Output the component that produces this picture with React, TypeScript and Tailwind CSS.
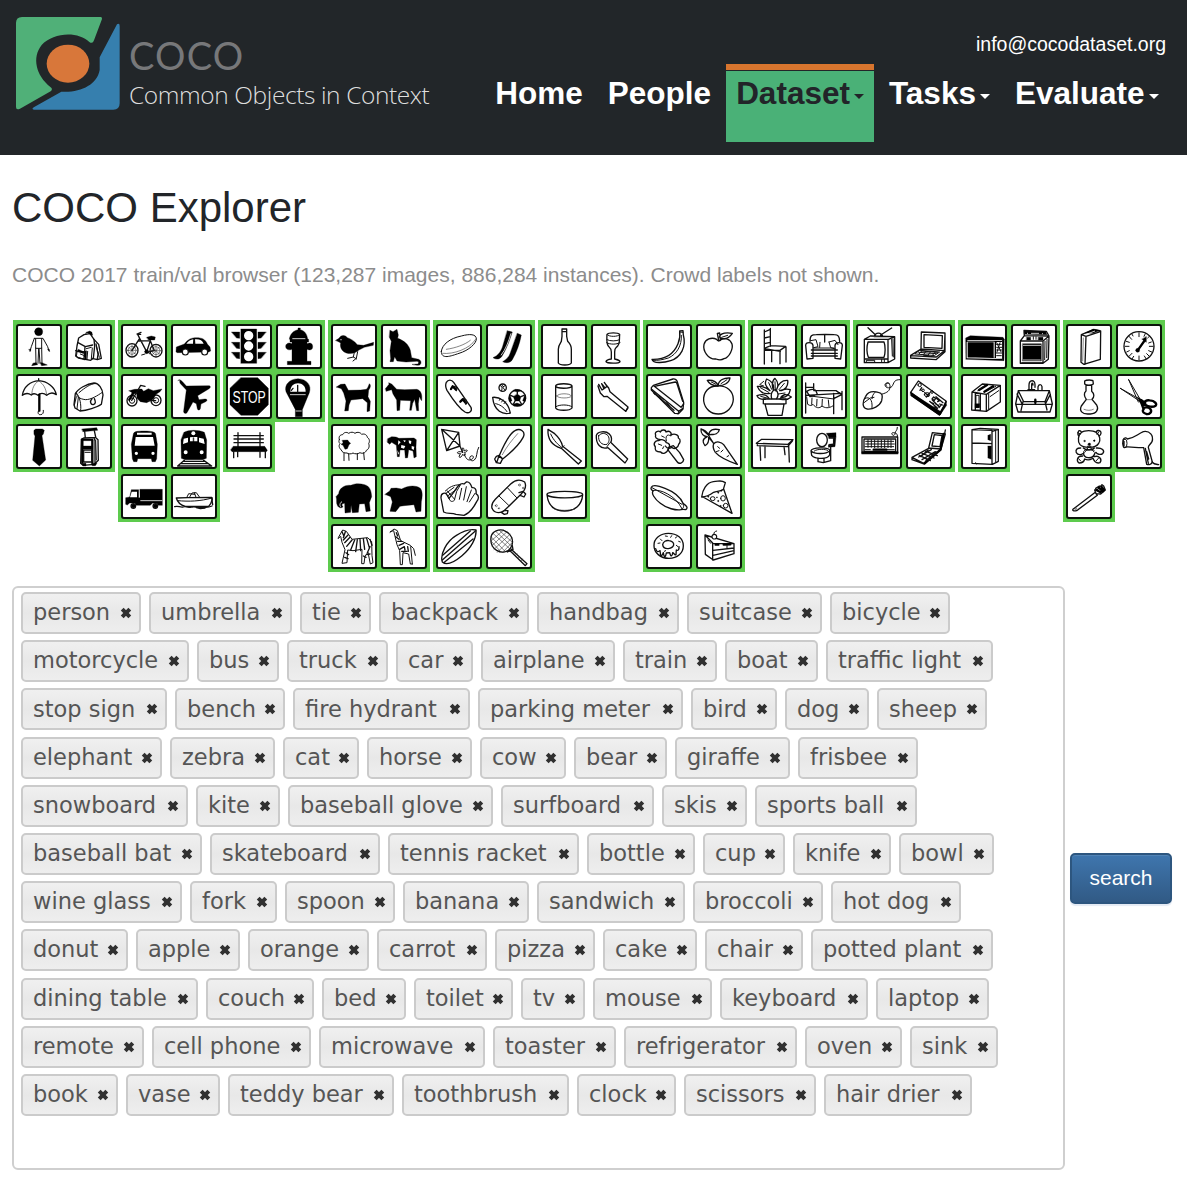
import React from "react";

type Kind = "s" | "m" | "t" | "b" | "f" | "w" | "o" | "x";
type Stroke = [Kind, string];
type Icon = { name: string; at: [number, number]; art: Stroke[] };

// Ellipse expressed as a path.
const c = (x: number, y: number, rx: number, ry: number = rx) =>
  `M${x - rx} ${y}a${rx} ${ry} 0 1 0 ${2 * rx} 0a${rx} ${ry} 0 1 0 ${-2 * rx} 0z`;

const KINDS: Record<Kind, { fill: string; stroke: string; strokeWidth: number }> = {
  s: { fill: "none", stroke: "#111", strokeWidth: 4 },
  m: { fill: "none", stroke: "#111", strokeWidth: 3 },
  t: { fill: "none", stroke: "#333", strokeWidth: 1.8 },
  b: { fill: "none", stroke: "#000", strokeWidth: 7 },
  f: { fill: "#000", stroke: "#000", strokeWidth: 1 },
  w: { fill: "#fff", stroke: "none", strokeWidth: 0 },
  o: { fill: "#fff", stroke: "#111", strokeWidth: 3.6 },
  x: { fill: "none", stroke: "#fff", strokeWidth: 2.4 },
};

const i = (name: string, x: number, y: number, art: Stroke[]): Icon => ({ name, at: [x, y], art });

const GROUPS: Icon[][] = [
  [
    i("person", 25, 22, [
      ["f", c(93, 45, 12)],
      ["m", "M80 65h26l14 25 4 13M80 65l-9 25-4 13M84 66v29h18V66M84 94l1 46M102 94l1 46M93 96l-2 44M94 96l3 44"],
      ["f", "M86 138l4 6-18 3 4-7zM98 138l5 0 16 7-17 2zM64 98l6 0-2 6zM120 98h5l1 6z"],
    ]),
    i("backpack", 175, 22, [
      ["s", "M213 64l16-10 18-3 12 17 2 20-4 37-8 6-37-7-8-6 4-30z"],
      ["s", "M211 78l22 12 22-5M232 90l-2 30M204 102l27 8M259 68l14 15 8 42-12 4-16-4M265 82l6 30-2 16"],
      ["m", "M234 54l2-7h14l3 8M208 106l-2 14 22 8 4-22zM236 96l15-4M240 104l-2 24M254 94l-3 32M218 112l10 4M267 92l8 30"],
      ["f", "M238 47l8-4 7 4 1 8-10-4zM212 98l16 7v4l-18-6zM232 104l5-2-1 26-6 2z"],
    ]),
    i("umbrella", 25, 172, [
      ["s", "M44 236c4-26 24-42 49-44 26 2 48 18 53 42-10-8-20-6-29 2-9-8-20-7-26 0-8-6-15-6-20-1-9-6-18-6-27 1zM93 192v-6"],
      ["t", "M92 193c-14 10-18 22-20 41M94 193c14 10 21 22 23 42"],
      ["b", "M95 234v48"],
      ["m", "M95 280c-7 4-4 15 3 14 8 0 10-6 9-13"],
    ]),
    i("handbag", 175, 172, [
      ["s", "M203 231c8-15 34-30 56-32 14 0 26 17 27 36l-5 28c-12 9-44 19-64 20l-15-9-3-10z"],
      ["m", "M206 228c2 13 8 18 27 21 18 0 36-12 51-22M207 230c10 11 14 35 12 51M214 228c20-17 35-26 46-27M200 266l6-26M208 276l4-34"],
      ["s", "M253 246c-8 8-4 19 4 18 8-2 7-10 3-18"],
    ]),
    i("tie", 25, 322, [["f", "M79 341l5-4 20 0 6 4-3 11-4 5 11 73-19 18-20-17 7-73-3-5z"]]),
    i("suitcase", 175, 322, [
      ["f", "M223 337l44-4 3 8-44 4z"],
      ["s", "M231 344l2 20M260 342l4 19M221 368l7-4 35-2 8 7 1 62-12 12-34 3-7-6zM259 364l3 8v68"],
      ["b", "M224 369v68M254 371v67"],
      ["s", "M230 391h22M228 400h25v36h-25z"],
      ["f", "M224 366h32v6h-32zM226 388h29v9h-29zM221 440h14v8h-8zM252 440h16l-5 7h-9z"],
      ["m", "M264 370l2 60M232 407h16"],
    ]),
  ],
  [
    i("bicycle", 340, 22, [
      ["s", c(373, 101, 18, 20)],
      ["s", c(445, 102, 18, 19)],
      ["t", c(373, 101, 12) + c(445, 102, 12)],
      ["t", "M373 84v34M357 101h32M362 90l22 23M384 89l-22 24M445 84v34M429 102h32M434 91l22 22M456 90l-22 24"],
      ["s", "M373 101l23-36 22 42 22-5-12-30-36 1M428 72l-12 36M396 65l-6-12h9M388 52l12-5"],
      ["f", "M417 62l14-4 12 3-2 9h-18z"],
      ["f", c(417, 105, 6)],
      ["m", "M412 112l-10 3M420 104l6 8"],
    ]),
    i("car", 490, 22, [
      ["f", "M505 105l1-14 24-9c11-15 22-19 37-19 17 0 27 6 32 19l8 9 2 12-6 3-94 2z"],
      ["w", "M536 81c7-9 13-12 21-13l-1 13zM562 68c14-1 22 3 26 13h-25z"],
      ["o", c(533, 106, 9) + c(591, 106, 9)],
      ["m", "M560 68l-1 14"],
    ]),
    i("motorcycle", 340, 172, [
      ["s", c(373, 252, 15, 16)],
      ["s", c(445, 251, 15, 16)],
      ["m", c(373, 252, 8) + c(445, 251, 8)],
      ["f", "M364 222l17-4 21-1 6 7 14-8 15 6 26-5-6 8-12 8-8 15-20 10-19-3-10-10-1-14-7 0-14 21-5-2 12-22z"],
      ["s", "M391 220l8-14 13 3M372 251l16-25M420 252h24"],
    ]),
    i("airplane", 490, 172, [
      ["f", "M511 191c4-4 10 0 15 6l10 11 65-1c9-1 9 6 2 10l-33 20 4 12 17-2c9 0 9 5 3 8l-14 7-2 14c-2 6-8 5-9 0l-3-15-10-5-18 32c-4 5-12 1-10-6l8-62-14-15c-6-5-7-9-5-14z"],
    ]),
    i("bus", 340, 322, [
      ["f", "M377 352c1-7 9-9 33-9 23 0 33 3 34 10l5 30-2 43-4 9h-10l-2-9h-41l-2 9h-10l-4-9-3-43z"],
      ["w", "M384 361h52l5 26h-60zM388 348h44v6h-44z"],
      ["w", c(386, 410, 5) + c(436, 410, 5)],
    ]),
    i("train", 490, 322, [
      ["f", "M529 347c7-4 17-6 29-6s24 2 32 6l7 23-1 55-11 4h-53l-11-4-1-55z"],
      ["w", c(557, 350, 6)],
      ["w", "M528 366l13-3v14l-15 5zM547 362l9-1h13v13h-22zM574 363l14 3 3 16-17-5z"],
      ["w", c(534, 407, 6) + c(582, 407, 6)],
      ["f", "M557 363h2v18h-2z"],
      ["s", "M530 431l-20 17M588 431l24 17M527 434h64M519 441h82M511 448h100"],
    ]),
    i("truck", 340, 472, [
      ["f", "M397 518h67v48h-12l-3-5-14-2-7 7h-42l-5-7-15 0-7 6-5-2v-20l12-2 5-22h22v24h4z"],
      ["w", "M372 525h16v17h-21z"],
      ["o", c(377, 568, 7) + c(443, 568, 7)],
      ["f", c(377, 568, 6) + c(443, 568, 6)],
      ["x", "M398 552h66"],
    ]),
    i("boat", 490, 472, [
      ["s", "M506 544l34-1 72-1 2 6-5 13-6 8-70 0c-18-5-24-13-27-25z"],
      ["m", "M510 552c34 3 68 2 103-8M537 543l6-12 18 2M546 541l7-12 13-1 10 14M560 528l5 14"],
      ["s", "M501 570c10-4 16 3 25 1 10-4 18 4 28 0 10-3 15 5 27 1 11-2 14 4 32-4M566 573l12 3 14-2M612 544l3 20"],
    ]),
  ],
  [
    i("traffic light", 19, 22, [
      ["f", "M64 37h47v103H64zM36 46h24v19l-9-1zM36 77h24v19l-9-1zM36 107h24v19l-9-1zM139 46h-24v19l9-1zM139 77h-24v19l9-1zM139 107h-24v19l9-1z"],
      ["w", c(87, 57, 14) + c(87, 88, 14) + c(87, 120, 14)],
    ]),
    i("fire hydrant", 169, 22, [
      ["f", "M209 67c2-15 12-25 26-28v-5h7v5c13 3 20 13 22 28l3 1v8h-5v5c10-4 17-1 17 9 0 9-8 12-17 8v36h12v10h-71v-10h14V98c-11 4-19 0-19-9 0-8 9-13 19-8v-5h-6v-8z"],
      ["x", "M218 66h39"],
    ]),
    i("stop sign", 19, 172, [["f", "M64 183h50l32 32v49l-32 32H64l-33-32v-49z"]]),
    i("parking meter", 169, 172, [
      ["f", "M199 225c-6-20 9-38 36-39 26 1 42 20 34 42l-21 51v21h-21v-21z"],
      ["w", "M212 225c0-17 10-25 23-25s23 9 23 25z"],
      ["s", "M234 206v20M220 215l-5 6"],
      ["x", "M211 234h47"],
      ["x", "M228 283h18"],
    ]),
    i("bench", 19, 322, [
      ["s", "M43 357h88M43 367h88M43 378h88M55 348v42M121 348v42"],
      ["f", "M41 389h94l8 12-3 4H37l-4-5z"],
      ["s", "M42 402v21M54 402v18M121 402v20M137 402v21"],
    ]),
  ],
  [
    i("bird", 333, 22, [
      ["f", "M347 71l10-6c4-10 18-12 25-2 10 3 20 9 30 21l19 2 30-9-1 9-27 6-16 8c-11 10-25 13-38 9-15-5-20-19-17-30z"],
      ["m", "M403 107l-3 14-17 4M413 105l-4 20-10 8M400 121l10 6"],
      ["w", c(363, 69, 1.8)],
    ]),
    i("cat", 484, 22, [
      ["f", "M511 41l9 4 12-7 4 17-2 10c18 6 33 18 38 36l4 22 17 4c12 1 14 14 7 18-8 2-20 0-23-2l17-1c4-2 4-8-2-8l-33 2-27-3-7-13-4 15h-10l2-9-2-24 4-28-6-12z"],
    ]),
    i("dog", 333, 172, [
      ["f", "M349 211l13-8 13-1 10 19 37-1 17-2c6-6 6-11 9-17 5 3 4 12-2 19l-2 20 7 14-2 29-8 2 1-27-14-12-35 4-6 15-2 17-11 1 4-30-7-24-7-13z"],
    ]),
    i("horse", 484, 172, [
      ["f", "M497 216l11-13-1-5 9 4 15 16 24 1 36-1c14 4 17 16 15 34-4-4-4-9-7-12l-3 21 1 21h-6l-6-34-6 12-4 21h-5l3-29-31-1-2 30-8 1-1-32-11-18-4-13-16 5z"],
    ]),
    i("sheep", 333, 322, [
      ["m", "M358 369c-3-9 2-15 10-15 3-7 12-9 18-4 7-5 14-4 19 0 8-6 17-2 20 3 9-3 16 2 17 9 8 5 7 14 4 19 4 9-1 18-7 20-2 8-12 11-19 7-7 5-16 4-21 1-6 4-14 3-18 0-8 1-16-3-17-9-8-7-8-14-4-19-4-4-4-8-2-12z"],
      ["f", "M367 371l16-1 5 7 4 3-5 4-5 12-7 2-6-12-6-3 6-4z"],
      ["m", "M372 410v22M386 411l1 20M412 411v18M431 408l2 21"],
    ]),
    i("cow", 484, 322, [
      ["f", "M504 366l12-6 13 1 9 4 45-1 7 5-1 23 1 28-7 4-3-21-13-4-3 24-7 1-2-24-14 0-2 20h-6l-3-34-14-9-6 6-7-6z"],
      ["w", "M536 371l7 6-8 8zM551 370l8 2-5 5zM567 371l8 2-1 9-6-2zM545 385l12 3-4 8-9-3zM576 388l8 2-2 10-6-4zM533 400l5 10-3 4z"],
    ]),
    i("elephant", 333, 472, [
      ["f", "M348 540l8-9c2-18 20-27 36-25 12-6 28-6 42-2 15 4 20 17 21 36l-7 18 3 25-13 2-4-24-16 1-3 25-18 1-4-23-1 22-17 2-1-29c-9 0-10 7-5 10-3 5-14 5-17-4-4-8-1-16-3-23z"],
      ["x", "M366 555c-6 2-9 14-3 15"],
    ]),
    i("bear", 484, 472, [
      ["f", "M496 533l14-10 4-8 16-1 16 3c20-11 43-12 56-2 8 10 6 27 3 40l-1 29-15 2-6-22-30 3-12 2-13 16-17-1 7-28-5-16z"],
    ]),
    i("zebra", 333, 622, [
      ["m", "M356 661l12-21 11 4 17 24 47-5 12 12 1 42 3 21-8 4-7-35-9 11-3 23h-7l1-43-27 4-16-2-2 38-15 2 9-41-9-22-4-18-7 6z"],
      ["s", "M366 645l6 14M376 645l-6 18M384 655l-14 15M390 662l-16 16M396 670l-16 19M404 670l-12 30M412 669l-5 36M420 668l2 34M430 666l4 32M440 665l8 28M450 668l6 18M450 690l-8 18M378 708l8 6M374 722l10 4M450 712l-10 2M430 718l8 4"],
    ]),
    i("giraffe", 484, 622, [
      ["m", "M511 647l12-10 10 5 10 30 29 14 10 10 5 20M573 690l5 52M578 742l-6 0-5-30-17-4-2 36h-6l-2-42-8-18-10-42-10 3"],
      ["s", "M530 648l4 10M528 660l10 8M534 674l12 0M538 686l14-6M540 698l14-8M556 700l-2-10M566 704l-2-14M546 704l16 0"],
    ]),
  ],
  [
    i("frisbee", 19, 22, [
      ["m", "M35 104c2-20 25-39 60-46 25-7 45-6 45 9 0 13-22 34-52 43-24 8-54 20-53-6z"],
      ["t", "M39 110c31 4 83-14 98-41M50 98c28-4 56-14 72-27"],
    ]),
    i("skis", 169, 22, [
      ["f", "M233 42l15 4c-8 26-19 54-32 74-7 9-17 9-26 3 14-5 23-17 28-31zM263 50l12 5c-5 27-15 54-27 74-6 10-18 11-29 6 12-8 19-14 23-27z"],
      ["x", "M244 50c-7 24-16 48-30 66"],
    ]),
    i("snowboard", 19, 172, [
      ["s", "M50 197c5-9 16-9 22 0l52 75c5 13-7 20-18 14C91 277 66 243 52 221c-5-9-5-17-2-24z"],
      ["b", "M64 217l5-8 10 10M92 255l7-7 10 12"],
      ["s", "M74 209l8 4-2 9M100 246l9 4-1 12"],
    ]),
    i("sports ball", 169, 172, [
      ["s", c(219, 213, 11) + c(263, 244, 25, 24)],
      ["m", "M211 206c6 2 8 8 5 16M228 206l-9 5 7 10M215 203l6 7"],
      ["f", "M263 232l11 8-4 13h-14l-5-13zM250 222l13 4 13-4-6-3-13-1zM241 236l6 16-6 4-4-10zM285 236l-6 16 6 4 3-9zM250 263l12-4 14 5-7 4h-14z"],
      ["s", "M263 226v7M251 240l-8-4M274 240l9-4M256 253l-5 10M270 253l6 10M189 242c18-2 46 10 53 47-21 6-49-4-53-47z"],
      ["m", "M198 261c11 2 24 9 34 24M209 251l3-5M216 256l4-6M223 261l5-6"],
    ]),
    i("kite", 19, 322, [
      ["s", "M36 338l51 9 4 41-40 14zM36 338l55 50M87 347l-36 55M91 389l8 18"],
      ["m", "M98 406c-3-16 5-17 5-3 12-7 14 1 1 5 7 6 0 13-5 5-5 14-17 11-6-2-15 2-13-10 5-5zM104 413c6 18 14 19 22 15 8-4 6-13-2-10-9 5 0 20 10 12 10-8 5-24 13-38"],
    ]),
    i("baseball bat", 169, 322, [
      ["s", "M208 419c16-38 33-69 48-77 15-9 34 2 24 21-12 22-34 43-61 64zM200 419l8-3 11 10-7 14-12-2-5-11zM208 417l-7 21"],
      ["t", "M218 414c13-24 28-43 46-63"],
    ]),
    i("baseball glove", 19, 472, [
      ["s", "M42 586l-8-42c-1-17 14-16 17-11l7 12 14-18c12-18 20-30 31-25l7-6c9-2 14 8 17 17 10-2 14 8 12 18 11 7 8 16 2 24-10 20-23 35-38 41l-24-3c-14-5-25 0-37-7z"],
      ["m", "M92 505l-11 19-7 27c-8 7-14 2-16-6M96 515l-7 33M110 510l-8 40M125 520l-13 35M136 530l-17 26M47 523c13-12 22-18 45-19M49 530l24-18M54 538l26-20M52 522l22 25"],
    ]),
    i("skateboard", 169, 472, [
      ["s", "M187 575c-3-12 3-20 10-27l46-46c15-14 31-13 42-6 6 12 1 25-11 37l-43 42c-17 17-36 17-44 0zM268 528l12-4 8 8-5 9-11-5M219 585l5-3h11l-2 9-9 2-8-5"],
      ["m", "M208 538l29 28M233 513l28 30"],
      ["t", c(200, 567, 3) + c(270, 505, 3) + c(281, 514, 2) + c(208, 575, 2)],
    ]),
    i("surfboard", 19, 622, [
      ["s", "M38 736c-8-23 13-62 41-79 23-15 43-21 60-17 2 23-14 54-43 78-23 19-46 29-58 18z"],
      ["s", "M38 730L138 642M44 737L130 667M39 716L122 643"],
    ]),
    i("tennis racket", 169, 622, [
      ["s", "M184 662c2-18 25-28 44-18 17 8 25 27 18 44-9 21-31 22-45 13-14-8-19-22-17-39zM247 682l3 17-17 7"],
      ["t", "M190 650l52 48M184 660l43 45M198 644l48 45M209 641l39 36M185 674l28 31M241 653l-48 45M232 645l-45 42M246 664l-43 43M221 641l-37 32M247 678l-29 30"],
      ["s", "M244 697l10 10 38 34-5 6-39-38-9-8"],
      ["t", "M254 704l4 6M262 711l-5 6M270 719l-5 6M278 727l-4 6"],
    ]),
  ],
  [
    i("bottle", 333, 22, [["s", "M396 37h14v22l3 15c8 8 11 14 11 24v41c-5 8-34 8-39 0V98c0-10 4-16 9-24l2-15zM396 45h14"]]),
    i("wine glass", 484, 22, [
      ["s", "M532 53c5-6 33-6 38 0-2 17 3 31-10 39-5 4-5 7-5 14v21c8 2 15 3 16 8-2 6-39 6-42 0 1-5 8-7 16-8v-21c0-7-1-10-6-14-10-8-8-23-7-39z"],
      ["m", "M533 54c4 7 32 7 37 0M532 69c8 5 29 5 38 0M531 78c10 6 29 6 40 0"],
    ]),
    i("cup", 333, 172, [
      ["s", "M377 207v67c5 9 43 9 49 0v-67M377 208c2-9 46-9 49 0-3 9-47 9-49 0z"],
      ["t", "M380 238c4-9 40-9 44 0-3 8-41 8-44 0z"],
      ["m", "M378 270c9-7 38-7 47 0"],
    ]),
    i("fork", 484, 172, [
      ["s", "M507 203l10 17 6-4-7-15M516 201l10 13 6-5-8-12M524 198l13 16 4 11 54 46-7 13-56-45-9 1-11-11-7-21"],
      ["s", "M589 283l6-9"],
    ]),
    i("knife", 333, 322, [
      ["s", "M354 338l20 13c16 14 21 25 24 38l56 44-9 9-51-47c-28-8-42-25-40-57z"],
      ["m", "M394 395l8-8M362 352c9 20 22 32 33 40"],
    ]),
    i("spoon", 484, 322, [
      ["s", "M500 356c3-12 28-15 39-4 8 8 8 19 4 25l51 50-8 12-51-46c-22 7-37-12-35-37z"],
      ["m", "M507 357c8-10 21-8 28 0 6 10 3 20-3 26-15 4-28-9-25-26zM541 378l-9 12"],
    ]),
    i("bowl", 333, 472, [
      ["s", "M351 533c0-12 106-12 107 0 0 14-106 14-107 0zM351 534c3 32 22 49 53 49s52-18 54-49"],
      ["t", "M374 578c16 4 42 4 60 0"],
    ]),
  ],
  [
    i("banana", 19, 22, [
      ["s", "M120 43l10-1 1 13c10 36-8 67-38 77-21 7-53 9-56-4 36 1 65-15 78-47 6-15 7-25 5-38z"],
      ["m", "M125 56c2 31-14 57-39 68-17 5-31 8-45 7M120 46l10 1"],
    ]),
    i("apple", 169, 22, [
      ["s", "M231 68c-16-8-34 0-38 15-4 19 12 46 36 44 10 4 18 3 24-1 16-3 28-30 24-44-6-16-20-19-33-13-5 5-10 4-13-1z"],
      ["s", "M237 72l-4-22 7-1 2 21M239 61c4-12 18-14 39-11-8 12-19 19-33 15z"],
      ["m", "M246 62l18-6"],
    ]),
    i("sandwich", 19, 172, [
      ["s", "M41 206l59-19c6-1 12 3 13 9l19 61-2 20-13 14-12-1-70-70v-7z"],
      ["s", "M42 207l82 65 8-10M36 218l81 66 12-8M42 228l61 53M44 209l63-13c3 0 4 2 5 5l17 53"],
      ["m", "M36 220l10 14M57 238l14 10M80 256l10 12M117 284l-2 8"],
    ]),
    i("orange", 169, 172, [
      ["s", "M234 208c-28-1-44 20-42 45 4 25 22 39 44 39 26-1 44-21 45-44 0-25-21-42-47-40z"],
      ["s", "M235 208c-14-1-27-7-32-17 16-1 28 3 32 16 2-17 18-24 36-23-2 15-19 23-35 23z"],
      ["m", "M215 196l14 7M262 189l-18 12"],
    ]),
    i("broccoli", 19, 322, [
      ["s", "M63 369c-15 0-17-9-15-14-5-10 9-14 14-9 4-10 17-6 17 0 10-6 19 2 14 10 12-8 25 0 23 8 9 4 5 15 1 19-2 12-14 16-21 9-9 6-15 2-19-4M80 378c13 3 11 12 6 18-4 16-18 17-23 10-14 0-18-5-16-16-8-8 0-20 10-18 8-5 18-4 23 6z"],
      ["s", "M87 392l14-5 19 21 12 21c-1 11-14 14-19 7l-27-35z"],
      ["m", "M80 373c-5-18 7-22 12-15M56 382l10 4M72 390l-3 6M66 358l8 4"],
    ]),
    i("carrot", 169, 322, [
      ["s", "M222 381c9-9 23-5 30 3l41 59c-28-10-54-22-66-36-6-9-8-18-5-26zM222 381l-16-26-19-17M206 354c-6-12-14-15-22-17-1 14 8 22 19 23-17 7-14 18-7 27 10-5 12-14 11-25l15 18M207 355c2-15 14-20 32-16-2 12-14 16-24 14z"],
      ["m", "M234 390l6 5M230 405l8-3M250 400l-6 6M262 420l5-3"],
    ]),
    i("hot dog", 19, 472, [
      ["s", "M35 512c4-9 24-4 43 4 23 9 44 25 53 45 12 8 14 13 7 18-8-2-9-2-14 0-14 3-44-4-62-19-17-13-29-31-21-38-7-1-8-7-6-10z"],
      ["m", "M42 521c20-4 65 15 85 55M124 578c8-2 10-9 6-17M37 513l90 50"],
    ]),
    i("pizza", 169, 472, [
      ["s", "M186 541c2-21 14-43 35-46 16-1 18-4 28-1l8 4-6 20c-10 7-20 5-29 9-12 9-23 14-36 14zM190 541l87 49-25-73"],
      ["m", c(219, 546, 7, 6) + c(250, 545, 7, 8) + c(258, 567, 7)],
      ["f", c(236, 528, 2) + c(236, 553, 2) + c(243, 568, 2) + c(206, 540, 2) + c(245, 522, 2) + c(232, 542, 1.5)],
    ]),
    i("donut", 19, 622, [
      ["s", "M43 687c-1-22 20-37 43-37 26 0 45 15 45 37s-18 38-43 38c-26 0-45-17-45-38z"],
      ["s", "M69 684c1-9 11-14 19-12 8 1 15 6 14 13-3 10-11 10-18 11-7 0-14-3-15-12zM48 696c4 14 9 8 13 6l2 14c3 4 6-4 8-8 2 14 6 17 9 1l10-1c4 15 8 11 9 0 5 3 7 9 10 6l1-14c5 3 9-1 8-10"],
      ["m", "M62 667l5 5M77 658l6 1M96 657l-3 5M107 664l5-4M117 674l5 2M55 680l6-1M110 686l5 4M74 704l4-2"],
    ]),
    i("cake", 169, 622, [
      ["s", "M196 655l87 26v30l-62 19-24-17zM196 655l23 24v51M219 681h64M220 701l63-7M220 716l63-14"],
      ["b", "M228 684l8 0M252 684l20-1"],
      ["o", c(224, 660, 7)],
      ["m", "M223 653c-2-6 3-9 8-10M205 670l8 10M262 694v-8"],
    ]),
  ],
  [
    i("chair", 333, 22, [
      ["s", "M373 40v102M391 35v54M373 46l18-8M373 64l18-4M373 81l18-4M373 95l19-8 45 2-17 12-46-1M374 96l47 8M438 91v45M420 103v38M395 103v32"],
    ]),
    i("couch", 484, 22, [
      ["s", "M511 74c0-18 5-20 19-20l27-1 27 1c12 0 15 5 16 20M555 54v22M515 100h78M515 110h78M515 118h78"],
      ["s", "M498 86c0-11 20-11 22 0v39l-18 2zM608 86c0-11-20-11-22 0v39l17 2z"],
      ["m", "M513 72l16-3 6 21-13 3M568 76l18-5 9 13M568 76l5 17 14 4M522 94h60M540 92l1-15"],
    ]),
    i("potted plant", 333, 172, [
      ["s", "M370 247h68v14l-6 1-6 34h-42l-9-34-5-1zM376 262h55"],
      ["s", "M390 230c-20 4-33-7-38-21 17-1 27 3 38 13-15-16-17-23-10-35 16 7 24 18 20 33-6-18-2-29 5-35 11 12 11 22 5 33 6-20 18-28 33-27 3 18-9 31-24 31 15-6 23-6 32-3-3 17-14 25-28 22M376 248c-16 1-22-4-25-11 16-6 28-4 36 8M395 246c-4-15 2-25 11-27 10 7 10 17 4 27M420 247c6-13 18-19 34-6-9 8-23 9-34 6"],
      ["m", "M386 198l9 20M405 195l1 28M433 200l-16 19M361 213l25 14M362 239l22 6M435 229l-20 3M371 208l-12-4 12-10"],
    ]),
    i("bed", 484, 172, [
      ["s", "M498 199v90M522 201v20M498 212h24M498 236l106-6M582 230v61M607 224v55M582 246l24-12M523 222h66l16 11M501 224c9-6 19-8 27-3l5 12-22 7z"],
      ["m", "M501 241l3 22c8 5 12 4 16 0 9 12 19 13 27 5 8 6 20 8 32 0M517 244l-1 19M532 248l-1 20M548 248l-1 19M566 250l2 20M512 238l71 9"],
    ]),
    i("dining table", 333, 322, [
      ["s", "M365 368l94 1-15 14-95-3zM352 380v7l91 3 14-17M360 388l2 43M375 388v35M432 389l3 25M446 386l2 50"],
    ]),
    i("toilet", 484, 322, [
      ["s", c(547, 370, 16, 20)],
      ["f", "M560 350l29-2v14l-20 2zM582 362l7-2-3 30-20 2 1-9 13-2z"],
      ["s", "M568 364h14v20l-14 3M514 402c3-10 51-12 56-2v14c-6 15-44 14-54 2zM514 403c12 11 46 9 56 0M535 424v11l16 3 22-6v-42M553 425v12"],
      ["m", "M524 403c8-7 34-6 40-2"],
    ]),
  ],
  [
    i("tv", 19, 22, [
      ["s", "M44 68h71v70H44zM44 68l18-10 73 2-20 9M135 61v66l-20 11M55 33l22 21M126 34L93 55M74 60c3-14 21-14 25 0zM45 127h70"],
      ["s", "M55 76h48c5 12 4 34 0 46H56c-5-14-5-32-1-46z"],
      ["m", "M51 131h24v6H51zM96 128v8M104 128v8M126 68l2 50M130 66l1 55"],
    ]),
    i("laptop", 169, 22, [
      ["s", "M215 46l71 3-2 53-70-5zM223 54l55 3-1 38-54-3zM214 97l-31 19v8l76 5 27-24V50M183 117l77 4 26-20"],
      ["m", "M196 111l14-10 60 5-15 10zM207 107l53 4M214 103l50 4M208 112l7-8M222 113l7-9M236 114l7-9M249 115l8-9M222 116l16 1"],
    ]),
    i("mouse", 19, 172, [
      ["s", "M48 239c7-14 23-16 38-12 12 1 14 11 10 25-6 16-27 27-43 25-17-3-15-23-5-38z"],
      ["m", "M47 245c12-6 22 3 20 28M77 226c-6 6-11 13-10 20M43 258l19-14 11-2M98 232c14-4 24-9 23-25-1-10-16-9-15-2 1 12 20 10 23 1 5-11 6-17 21-17M111 209c-6-8 1-15 8-9"],
    ]),
    i("remote", 169, 172, [
      ["s", "M206 193l83 60-17 40-89-66zM183 227l4 10 82 57 21-39"],
      ["f", "M183 227l89 57 17-28 2 10-21 31-87-60z"],
      ["m", c(210, 205, 5) + c(232, 234, 8, 6) + c(247, 226, 4) + c(220, 221, 4)],
      ["s", "M247 247l5-6 6 4-4 6zM260 245l6 5M264 255l7-4M243 257l9 4M258 262l9 4M253 271l10 5M270 262l8 3M248 250l20 20M259 240l21 18M240 254l23 20M216 213l-5 8M225 228l12 10M230 241l10-12M268 273l8-10"],
    ]),
    i("keyboard", 19, 322, [
      ["s", "M37 361h107v50H37zM43 367h95v37H43z"],
      ["m", "M48 374h84M48 382h86M46 390h86M46 399h16M76 399h28M112 399h22M55 369v23M65 369v23M75 370v23M85 370v23M95 370v23M105 370v23M115 370v23M124 370v23M143 361v-7c-5-8-22-8-15 0 1 4 9 2 8-4 1-8 7-7 7-18"],
      ["b", "M39 407h104M72 399h38"],
    ]),
    i("cell phone", 169, 322, [
      ["s", "M248 348l34 4-8 45-37-3zM254 354l23 3-6 33-24-2zM237 395l-50 27 35 18 52-43 13-45M187 422v7l37 13M285 351l2-11"],
      ["b", "M225 440l48-41M282 352l-9 44"],
      ["s", "M217 410l36 14M228 404l35 13M209 416l33 16M207 421l38-22M217 429l40-24M229 431l32-25M235 400l-22 20"],
    ]),
  ],
  [
    i("microwave", 333, 22, [
      ["f", "M347 64l14-7 98 5 4 6-1 64-114-4z"],
      ["w", "M352 71h104v2H352zM351 75h83v2h-83zM438 76h18v48h-18zM350 122l106 3v2l-106-2zM350 76h3v47h-3zM431 76h3v47h-3z"],
      ["m", "M439 83h15M438 109h18M450 78l-9 28M440 78l13 27M440 92h15M440 100h15M440 117h14"],
      ["t", "M458 70v58"],
    ]),
    i("oven", 484, 22, [
      ["s", "M512 73h68v67h-68zM512 73l12-16 74 1-18 15M598 58l-2 70-16 12M524 57l-1-16 67 3 8 14M524 44l62 4"],
      ["f", "M519 81h56v52h-56z"],
      ["x", "M520 86h54M520 130h53"],
      ["f", "M524 45h64l4 9-67-1zM531 62h12v8h-12zM566 62h14v8h-14z"],
      ["x", "M544 50h24M532 50h3M577 51h3"],
      ["m", "M586 74l-1 55M592 68l-1 55M516 138h64M551 60v8M559 60v8"],
    ]),
    i("toaster", 333, 172, [
      ["s", "M366 226l43 7v51l-44-4zM366 226l31-24 54 4-42 27M451 206v50l-42 28M376 230h15v51l-15-1z"],
      ["b", "M387 220l24-15M403 225l26-16"],
      ["m", "M379 236h8v36h-8zM409 224l28-15M383 222l24-17M416 232v45M420 240l26-18"],
      ["f", "M376 261h13v12h-13z"],
    ]),
    i("sink", 484, 172, [
      ["s", "M506 222h93l9 40-7 24H505l-7-24zM506 222l16 33h64l13-33M498 263h109M520 255l-6 27M586 255l6 25M502 232l15 29M602 233l-15 29"],
      ["s", "M538 218v-12c0-18 18-18 18-2v8M546 217v-12c0-8 4-6 4 0M565 220v-10c3-8 10-8 12 0v10M535 219h20"],
      ["b", "M557 249v10"],
    ]),
    i("refrigerator", 333, 322, [
      ["s", "M366 339l60 2v102l-60-3zM366 339l25-4 54 3-18 6M445 338v96l-18 9M366 379l60 2"],
      ["f", "M414 356l8-3v19l-8-3zM414 388h10v40l-10-4z"],
      ["m", "M437 344v91M377 438l2 4"],
    ]),
  ],
  [
    i("book", 34, 22, [
      ["s", "M80 54l36-15 22 4-1 85-50 15-8-6zM80 54l14 5-3 84M94 59l43-14"],
      ["f", "M92 49l24-12 20 4-20 9z"],
      ["x", "M97 52l24-9"],
      ["t", "M86 64l-2 69"],
    ]),
    i("clock", 184, 22, [
      ["s", c(253, 89, 45, 44)],
      ["m", "M253 48v12M253 118v11M212 89h11M284 89h11M223 59l8 9M231 51l4 7M215 74l9 3M223 119l9-9M232 127l5-8M216 106l8-4M284 119l-8-8M274 126l-5-8M291 106l-9-4M290 76l-8 3M272 51l-4 8M284 59l-5 5"],
      ["b", "M249 101l22-31"],
      ["f", c(249, 101, 6) + "M275 60v17l-13-9z"],
    ]),
    i("vase", 34, 172, [
      ["s", "M90 193c5-4 24-4 25 0l1 9c-6 5-21 5-26 0zM94 206v17c-8 6-5 18 1 25l-15 20c-7 15 3 24 19 24h8c19-1 26-15 19-27l-14-17c8-7 7-17-1-24v-19"],
      ["t", "M94 249h16M88 278c9 4 20 4 28 0"],
    ]),
    i("scissors", 184, 172, [
      ["m", "M222 189l29 67M197 215l64 36M222 189l34 58M197 215l59 39"],
      ["f", "M248 241l14 8 10 16-15-6z"],
      ["b", "M267 265c-1-13 10-15 18-14 17 1 22 12 18 16-9 6-23 3-30-2z"],
      ["b", "M265 279c2-9 17-8 22-2 7 9-3 17-12 15-8-3-13-7-10-13zM258 253l9 25M260 251l12 8"],
    ]),
    i("teddy bear", 34, 322, [
      ["s", "M81 347c8-7 34-7 43 0 13 8 14 26 8 33-10 17-47 14-56 4-8-11-6-29 5-37zM81 347c-9-13-14 1-9 12M124 347c5-13 25-1 9 12M86 394c8 8 26 8 33 0M78 394c-12 0-16 5-13 14 5 8 16 7 19 3M125 394c17-1 27 8 19 17-7 5-18 1-20-4M87 408c-3 18 28 22 34 1M84 418c-18 0-19 15-11 21 10 0 15-2 17-12 12 6 17 2 25-2 5 13 11 16 21 13 8-11-4-23-17-18"],
      ["f", c(90, 373, 2.5) + c(119, 372, 2.5) + c(104, 383, 4)],
      ["m", "M87 404l12-9M119 402l-13-9M90 407c8-13 22-11 28-1M72 426l6 7M132 424l-7 8M69 348l8 4M133 345l-6 8M98 389h11"],
    ]),
    i("hair drier", 184, 322, [
      ["s", "M205 370c3-8 11-8 13-3 21-3 28-13 48-22 19-4 32 12 26 30-5 9-11 11-11 17l12 44c-2 8-11 9-17 7l-9-50c-20 1-33-3-53-2-7 6-11-2-9-21z"],
      ["m", c(211, 380, 6, 13)],
      ["s", "M276 405l6 22M272 395l9 45M292 436c7 8 13 7 20 8M208 374v13"],
    ]),
    i("toothbrush", 34, 472, [
      ["s", "M57 576l65-49 6 9-62 46c-11 2-15-2-9-6zM128 519l14-15 5 4 5 12-14 12-14-1-4-11zM123 515l11-7"],
      ["b", "M125 520l13 7M132 513l13 11M141 511l7 9"],
      ["t", c(63, 576, 3)],
    ]),
  ],
];

const pairs = (icons: Icon[]) => {
  const rows: Icon[][] = [];
  for (let n = 0; n < icons.length; n += 2) rows.push(icons.slice(n, n + 2));
  return rows;
};

// Label and outer width of every selected category, one array per line.
const TAG_ROWS: [string, number][][] = [
  [["person", 120], ["umbrella", 143], ["tie", 71], ["backpack", 150], ["handbag", 142], ["suitcase", 135], ["bicycle", 120]],
  [["motorcycle", 168], ["bus", 82], ["truck", 101], ["car", 77], ["airplane", 134], ["train", 94], ["boat", 93], ["traffic light", 167]],
  [["stop sign", 146], ["bench", 110], ["fire hydrant", 177], ["parking meter", 205], ["bird", 86], ["dog", 84], ["sheep", 110]],
  [["elephant", 141], ["zebra", 105], ["cat", 76], ["horse", 105], ["cow", 86], ["bear", 93], ["giraffe", 115], ["frisbee", 120]],
  [["snowboard", 167], ["kite", 84], ["baseball glove", 205], ["surfboard", 153], ["skis", 85], ["sports ball", 162]],
  [["baseball bat", 181], ["skateboard", 170], ["tennis racket", 191], ["bottle", 108], ["cup", 82], ["knife", 98], ["bowl", 95]],
  [["wine glass", 161], ["fork", 87], ["spoon", 110], ["banana", 126], ["sandwich", 148], ["broccoli", 130], ["hot dog", 130]],
  [["donut", 107], ["apple", 104], ["orange", 121], ["carrot", 110], ["pizza", 100], ["cake", 94], ["chair", 98], ["potted plant", 182]],
  [["dining table", 177], ["couch", 108], ["bed", 84], ["toilet", 99], ["tv", 64], ["mouse", 119], ["keyboard", 148], ["laptop", 113]],
  [["remote", 123], ["cell phone", 159], ["microwave", 166], ["toaster", 123], ["refrigerator", 173], ["oven", 97], ["sink", 88]],
  [["book", 97], ["vase", 94], ["teddy bear", 166], ["toothbrush", 167], ["clock", 99], ["scissors", 132], ["hair drier", 148]],
];

function Tile({ icon }: { icon: Icon }) {
  const [x, y] = icon.at;
  return (
    <div className="h-[45px] w-[46px] overflow-hidden rounded-[3px] border-2 border-[#0c140b] bg-white">
      <svg viewBox={`${x} ${y} 138 135`} className="-m-[2px] block h-[45px] w-[46px] max-w-none" aria-label={icon.name}>
        {icon.art.map(([kind, d], n) => (
          <path key={n} d={d} {...KINDS[kind]} strokeLinejoin="round" strokeLinecap={kind === "x" ? "butt" : "round"} />
        ))}
        {icon.name === "stop sign" && (
          <text x="88.5" y="259" textAnchor="middle" textLength="100" lengthAdjust="spacingAndGlyphs" fill="#fff" className="font-['Liberation_Sans'] text-[50px]">
            STOP
          </text>
        )}
      </svg>
    </div>
  );
}

function Logo() {
  return (
    <div className="flex">
      <svg viewBox="45 48 318 285" className="h-[95px] w-[106px]">
        <path fill="#50b078" d="M66 51H302q5 0 4 6L282 121q-4 12-14 5C235 93 160 96 125 135c-30 38-17 91 26 126q9 6 1 13L60 326q-12 5-12-5V69q0-18 18-18z" />
        <path fill="#367fae" d="M351 73q8-5 8 5V310q0 19-19 19H102q-10-3 2-9l80-45c56 4 107-20 115-65V172z" />
        <ellipse cx="204" cy="191" rx="64" ry="57" fill="#d8773a" />
      </svg>
      <div className="flex flex-col pl-[8px] whitespace-nowrap">
        <span className="mt-[16px] h-[46px] font-[Lato] text-[38px] leading-[46px] tracking-[1.2px] text-[#77787a]">COCO</span>
        <span className="font-['Open_Sans'] text-[24.5px] leading-[34px] font-light tracking-[-0.4px] text-[#dedede]">
          Common Objects in Context
        </span>
      </div>
    </div>
  );
}

function NavItem({ label, caret, active }: { label: string; caret?: boolean; active?: boolean }) {
  return (
    <a
      className={
        active
          ? "h-[78px] border-t-[6px] border-[#d8752e] bg-[#4ab177] px-[10.5px] text-[#222529]"
          : "h-[78px] border-t-[6px] border-transparent px-[10.5px] text-white"
      }
    >
      <span className={active ? "-mx-[10.5px] block h-px bg-[#222529]" : "block h-px"} />
      <span className="flex items-center gap-[4px] leading-[44px]">
        {label}
        {caret && (
          <svg viewBox="0 0 10 5" className="mt-[6px] h-[5px] w-[10px]">
            <path d="M0 0h10L5 5z" fill="currentColor" />
          </svg>
        )}
      </span>
    </a>
  );
}

function Tag({ label, width }: { label: string; width: number }) {
  return (
    <li
      style={{ width }}
      className="flex h-[42px] shrink-0 items-center justify-between rounded-[5px] border-2 border-[#cbcbcb] bg-linear-to-b from-[#f0f0f0] via-[#e8e8e8] via-50% to-[#eeeeee] pr-[7px] pl-[10px] text-[22.5px] whitespace-nowrap text-[#555]"
    >
      <span>{label}</span>
      <svg viewBox="0 0 12 12" className="h-[12px] w-[12px] shrink-0">
        <path d="M2.2 2.2l7.6 7.6M9.8 2.2L2.2 9.8" stroke="#303030" strokeWidth="4" />
      </svg>
    </li>
  );
}

export default function App() {
  return (
    <div className="h-[1191px] w-[1187px] overflow-hidden bg-white font-['Liberation_Sans',sans-serif]">
      <header className="flex h-[155px] justify-between bg-[#222629] pt-[16px] pr-[18px] pl-[15px]">
        <Logo />
        <div className="flex flex-col items-end">
          <a className="mt-[17px] mr-[3px] h-[31px] text-[19.5px] leading-[23px] text-white">info@cocodataset.org</a>
          <nav className="flex gap-[4px] text-[31.5px] font-bold whitespace-nowrap">
            <NavItem label="Home" />
            <NavItem label="People" />
            <NavItem label="Dataset" caret active />
            <NavItem label="Tasks" caret />
            <NavItem label="Evaluate" caret />
          </nav>
        </div>
      </header>

      <main className="px-[12px]">
        <h1 className="pt-[29px] text-[42px] leading-[48px] text-[#222529]">COCO Explorer</h1>
        <p className="mt-[28px] text-[21px] leading-[30px] whitespace-nowrap text-[#8c8c8c]">
          COCO 2017 train/val browser (123,287 images, 886,284 instances). Crowd labels not shown.
        </p>

        <section className="mt-[30px] ml-px flex h-[266px] gap-[3px]">
          {GROUPS.map((group, g) => (
            <div key={g} className="flex w-[102px] shrink-0 flex-col items-start">
              {pairs(group).map((row, r) => (
                <div key={r} className="-mb-[2px] flex h-[52px] shrink-0 gap-[4px] bg-[#5dcb4d] px-[3px] pt-[4px]">
                  {row.map((icon) => (
                    <Tile key={icon.name} icon={icon} />
                  ))}
                </div>
              ))}
            </div>
          ))}
        </section>

        <section className="flex items-center gap-[5px]">
          <div className="flex h-[584px] w-[1053px] flex-col gap-[6.2px] rounded-[6px] border-2 border-[#cfcfcf] pt-[4px] pl-[7px] font-['DejaVu_Sans']">
            {TAG_ROWS.map((row, r) => (
              <ul key={r} className="flex gap-[8px]">
                {row.map(([label, width]) => (
                  <Tag key={label} label={label} width={width} />
                ))}
              </ul>
            ))}
          </div>
          <button className="h-[51px] w-[102px] rounded-[5px] border-2 border-[#2d567f] bg-linear-to-b from-[#3f76ae] to-[#315a85] text-[21px] text-white shadow-[inset_0_1px_0_#5284b6,0_2px_1px_#e4eaf4]">
            search
          </button>
        </section>
      </main>
    </div>
  );
}
